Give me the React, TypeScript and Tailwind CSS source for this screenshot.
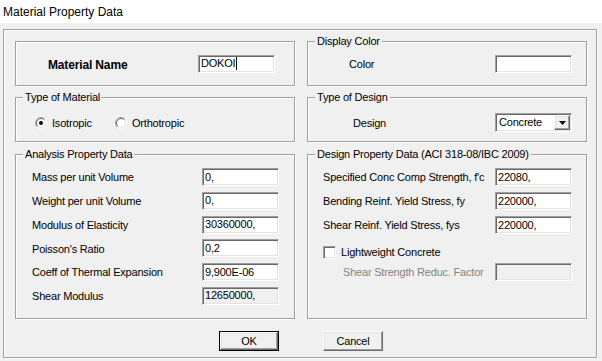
import React from "react";

const etched = "border border-[#a0a0a0] shadow-[1px_1px_0_#fff,inset_1px_1px_0_#fff]";
const sunken =
  "border border-t-[#a0a0a0] border-l-[#a0a0a0] border-r-white border-b-white shadow-[inset_1px_1px_0_#696969,inset_-1px_-1px_0_#e3e3e3]";
const raised =
  "border border-t-white border-l-white border-r-[#696969] border-b-[#696969] shadow-[inset_-1px_-1px_0_#a0a0a0,inset_1px_1px_0_#e3e3e3]";

function Field({
  value = "",
  disabled = false,
  caret = false,
  w = "w-[77px]",
}: {
  value?: string;
  disabled?: boolean;
  caret?: boolean;
  w?: string;
}) {
  return (
    <div
      className={`${sunken} ${w} h-[18px] shrink-0 flex items-center pl-[2px] leading-none ${
        disabled ? "bg-[#f0f0f0]" : "bg-white"
      }`}
    >
      <span>{value}</span>
      {caret && <span className="ml-[1px] w-px h-[13px] bg-black" />}
    </div>
  );
}

function Legend({ children }: { children: React.ReactNode }) {
  return (
    <span className="-mt-[7px] ml-[7px] self-start bg-[#f0f0f0] px-[2px] leading-[13px] h-[13px]">
      {children}
    </span>
  );
}

function Radio({ checked }: { checked?: boolean }) {
  return (
    <svg width="12" height="12" viewBox="0 0 12 12" className="shrink-0">
      <circle cx="6" cy="6" r="5" fill="#fff" />
      <path d="M2.1 9.9 A5.5 5.5 0 0 1 9.9 2.1" stroke="#a0a0a0" fill="none" />
      <path d="M2.8 9.2 A4.5 4.5 0 0 1 9.2 2.8" stroke="#696969" fill="none" />
      <path d="M9.9 2.1 A5.5 5.5 0 0 1 2.1 9.9" stroke="#fff" fill="none" />
      <path d="M9.2 2.8 A4.5 4.5 0 0 1 2.8 9.2" stroke="#e3e3e3" fill="none" />
      {checked && <circle cx="6" cy="6" r="2" fill="#000" />}
    </svg>
  );
}

function Row({ label, children }: { label: string; children: React.ReactNode }) {
  return (
    <div className="flex items-center justify-between h-[18px]">
      <span className="pt-[1px]">{label}</span>
      {children}
    </div>
  );
}

export default function App() {
  return (
    <div className="w-[602px] h-[361px] bg-[#f0f0f0] flex flex-col overflow-hidden font-['Liberation_Sans',Arial,sans-serif] text-[11px] text-black tracking-[-0.2px]">
      {/* title bar */}
      <div className="h-[23px] bg-white pl-[3px] flex items-center text-[12px] tracking-normal">
        Material Property Data
      </div>

      <div className="px-[3px] pt-[6px]">
        <div className={`${etched} w-[594px] h-[329px] flex flex-col pt-[11px] pl-[11px]`}>
          <div className="flex gap-[12px]">
            {/* left column */}
            <div className="w-[280px] flex flex-col">
              <div className={`${etched} h-[45px] flex items-center justify-between pl-[32px] pr-[19px]`}>
                <span className="font-bold text-[12px] tracking-[-0.15px] pt-[3px]">Material Name</span>
                <Field value="DOKOI" caret />
              </div>

              <div className={`${etched} h-[45px] mt-[11px] flex flex-col`}>
                <Legend>Type of Material</Legend>
                <div className="mt-[12px] h-[14px] flex items-center pl-[19px]">
                  <div className="w-[80px] flex items-center gap-[5px]">
                    <Radio checked />
                    <span>Isotropic</span>
                  </div>
                  <div className="flex items-center gap-[5px]">
                    <Radio />
                    <span>Orthotropic</span>
                  </div>
                </div>
              </div>

              <div className={`${etched} h-[165px] mt-[12px] flex flex-col`}>
                <Legend>Analysis Property Data</Legend>
                <div className="mt-[7px] flex flex-col gap-[5.8px] pl-[16px] pr-[15px]">
                  <Row label="Mass per unit Volume">
                    <Field value="0," />
                  </Row>
                  <Row label="Weight per unit Volume">
                    <Field value="0," />
                  </Row>
                  <Row label="Modulus of Elasticity">
                    <Field value="30360000," />
                  </Row>
                  <Row label="Poisson's Ratio">
                    <Field value="0,2" />
                  </Row>
                  <Row label="Coeff of Thermal Expansion">
                    <Field value="9,900E-06" />
                  </Row>
                  <Row label="Shear Modulus">
                    <Field value="12650000," disabled />
                  </Row>
                </div>
              </div>
            </div>

            {/* right column */}
            <div className="w-[280px] flex flex-col">
              <div className={`${etched} h-[45px] flex flex-col`}>
                <Legend>Display Color</Legend>
                <div className="mt-[7px] flex items-center justify-between pl-[41px] pr-[14px]">
                  <span className="pt-[1px]">Color</span>
                  <Field />
                </div>
              </div>

              <div className={`${etched} h-[45px] mt-[11px] flex flex-col`}>
                <Legend>Type of Design</Legend>
                <div className="mt-[9px] flex items-center justify-between pl-[45px] pr-[14px]">
                  <span className="pt-[1px]">Design</span>
                  <div className={`${sunken} w-[77px] h-[19px] bg-white flex items-center justify-between pl-[3px] pr-[1px]`}>
                    <span>Concrete</span>
                    <div className={`${raised} w-[16px] h-[15px] bg-[#f0f0f0] flex items-center justify-center`}>
                      <svg width="7" height="4" viewBox="0 0 7 4">
                        <path d="M0 0h7L3.5 4z" fill="#000" />
                      </svg>
                    </div>
                  </div>
                </div>
              </div>

              <div className={`${etched} h-[165px] mt-[12px] flex flex-col`}>
                <Legend>Design Property Data (ACI 318-08/IBC 2009)</Legend>
                <div className="mt-[7px] flex flex-col gap-[6px] pl-[15px] pr-[14px]">
                  <Row label="Specified Conc Comp Strength, f'c">
                    <Field value="22080," />
                  </Row>
                  <Row label="Bending Reinf. Yield Stress, fy">
                    <Field value="220000," />
                  </Row>
                  <Row label="Shear Reinf. Yield Stress, fys">
                    <Field value="220000," />
                  </Row>
                </div>
                <div className="mt-[12px] pl-[15px] flex items-center gap-[5px] h-[13px]">
                  <div className={`${sunken} w-[13px] h-[13px] bg-white`} />
                  <span>Lightweight Concrete</span>
                </div>
                <div className="mt-[4px] pl-[35px] pr-[14px] flex items-center justify-between h-[18px]">
                  <span className="text-[#838383] pt-[1px]">Shear Strength Reduc. Factor</span>
                  <Field disabled />
                </div>
              </div>
            </div>
          </div>

          {/* buttons */}
          <div className="mt-[12px] ml-[204px] flex gap-[44px]">
            <div className="w-[60px] h-[20px] border border-black">
              <div className={`${raised} w-full h-full flex items-center justify-center`}>OK</div>
            </div>
            <div className={`${raised} w-[60px] h-[20px] flex items-center justify-center`}>Cancel</div>
          </div>
        </div>
      </div>
    </div>
  );
}
